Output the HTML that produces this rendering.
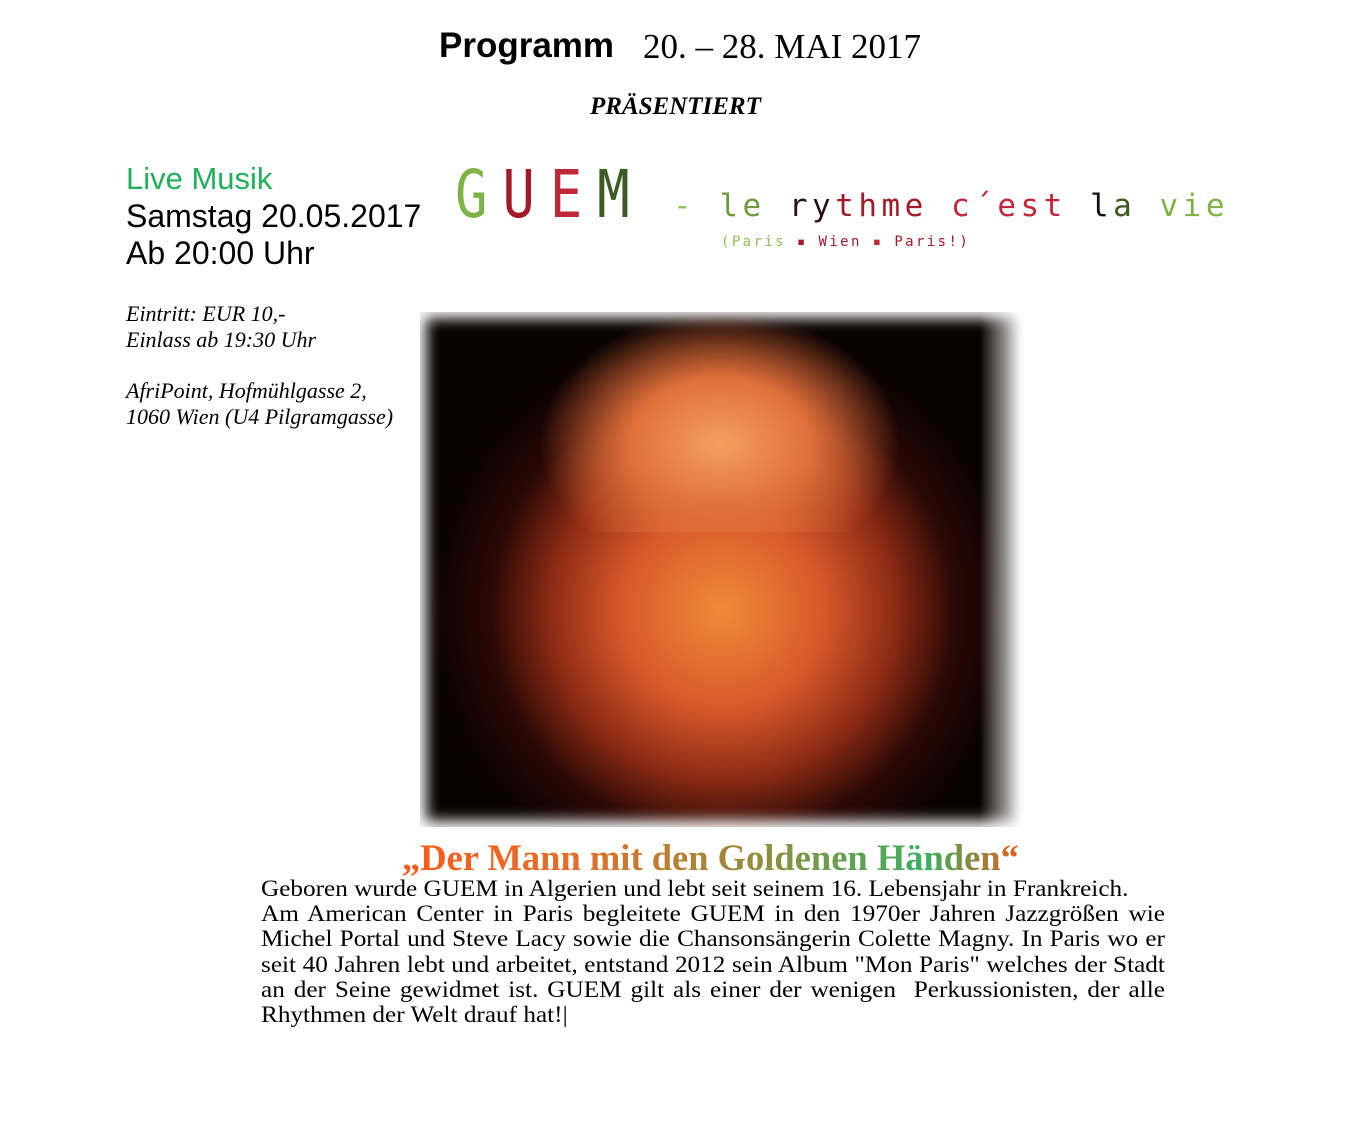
<!DOCTYPE html>
<html><head><meta charset="utf-8">
<style>
html,body{margin:0;padding:0;background:#fff;width:1355px;height:1126px;overflow:hidden;position:relative}
.a{position:absolute;white-space:nowrap}
.sans{font-family:"Liberation Sans",sans-serif}
.serif{font-family:"Liberation Serif",serif}
.mono{font-family:"DejaVu Sans Mono","Liberation Mono",monospace}
</style></head><body>
<div class="a sans" style="left:439px;top:26px;font-size:35px;font-weight:bold;">Programm</div>
<div class="a serif" style="left:643px;top:27px;font-size:35px;">20. – 28. MAI 2017</div>
<div class="a serif" style="left:590px;top:93px;font-size:25px;font-weight:bold;font-style:italic;">PRÄSENTIERT</div>

<div class="a sans" style="left:126px;top:161px;font-size:31px;color:#1fb15a;">Live Musik</div>
<div class="a sans" style="left:126px;top:198px;font-size:32px;">Samstag 20.05.2017</div>
<div class="a sans" style="left:126px;top:235px;font-size:32px;">Ab 20:00 Uhr</div>

<div class="a serif" style="left:126px;top:301px;font-size:22px;font-style:italic;line-height:26px;">Eintritt: EUR 10,-<br>Einlass ab 19:30 Uhr</div>
<div class="a serif" style="left:126px;top:378px;font-size:22px;font-style:italic;line-height:26px;">AfriPoint, Hofmühlgasse 2,<br>1060 Wien (U4 Pilgramgasse)</div>

<div class="a mono" style="left:455px;top:156px;font-size:66px;letter-spacing:18px;transform:scaleX(0.82);transform-origin:left;"><span style="color:#7fb347">G</span><span style="color:#a01a2a">U</span><span style="color:#c0283a">E</span><span style="color:#3d5a22">M</span></div>
<div class="a mono" style="left:673px;top:188px;font-size:31px;letter-spacing:4.5px;"><span style="color:#8cc35a">-</span> <span style="color:#6e9a3f">le</span> <span style="color:#2a1010">ry</span><span style="color:#a01a2a">thme</span> <span style="color:#c0283a">c´est</span> <span style="color:#111">l</span><span style="color:#3d5a22">a</span> <span style="color:#7fb347">vie</span></div>
<div class="a mono" style="left:721px;top:234px;font-size:14px;letter-spacing:2.4px;"><span style="color:#8cc35a">(Paris</span> <span style="color:#a01a2a">▪ Wien</span> <span style="color:#c0283a">▪</span> <span style="color:#a01a2a">Paris!)</span></div>

<div class="a" style="left:420px;top:312px;width:605px;height:515px;background:radial-gradient(ellipse 48% 55% at 50% 58%,#f08a3a 0%,#d8582a 35%,#8a2a14 60%,#2a0805 80%,#0a0202 100%);box-shadow:0 0 14px 6px #fff inset;"></div>
<div class="a" style="left:540px;top:312px;width:360px;height:220px;background:radial-gradient(ellipse 50% 60% at 50% 60%,#f5a060 0%,#e0703a 50%,rgba(0,0,0,0) 100%);"></div>
<div class="a" style="left:980px;top:312px;width:45px;height:515px;background:linear-gradient(90deg,rgba(255,255,255,0),#fff);"></div>

<div class="a serif" style="left:402px;top:836px;font-size:36.5px;font-weight:bold;background:linear-gradient(90deg,#ff5a1a 0%,#e0702a 30%,#9a8a3a 55%,#3ab060 85%,#e06020 100%);-webkit-background-clip:text;background-clip:text;color:transparent;">„Der Mann mit den Goldenen Händen“</div>

<div class="a serif" style="left:261px;top:876px;width:824px;font-size:23px;line-height:25.2px;white-space:normal;text-align:justify;transform:scaleX(1.097);transform-origin:left top;">Geboren wurde GUEM in Algerien und lebt seit seinem 16. Lebensjahr in Frankreich.<br>Am American Center in Paris begleitete GUEM in den 1970er Jahren Jazzgrößen wie Michel Portal und Steve Lacy sowie die Chansonsängerin Colette Magny. In Paris wo er seit 40 Jahren lebt und arbeitet, entstand 2012 sein Album "Mon Paris" welches der Stadt an der Seine gewidmet ist. GUEM gilt als einer der wenigen&nbsp; Perkussionisten, der alle Rhythmen der Welt drauf hat!|</div>
</body></html>
